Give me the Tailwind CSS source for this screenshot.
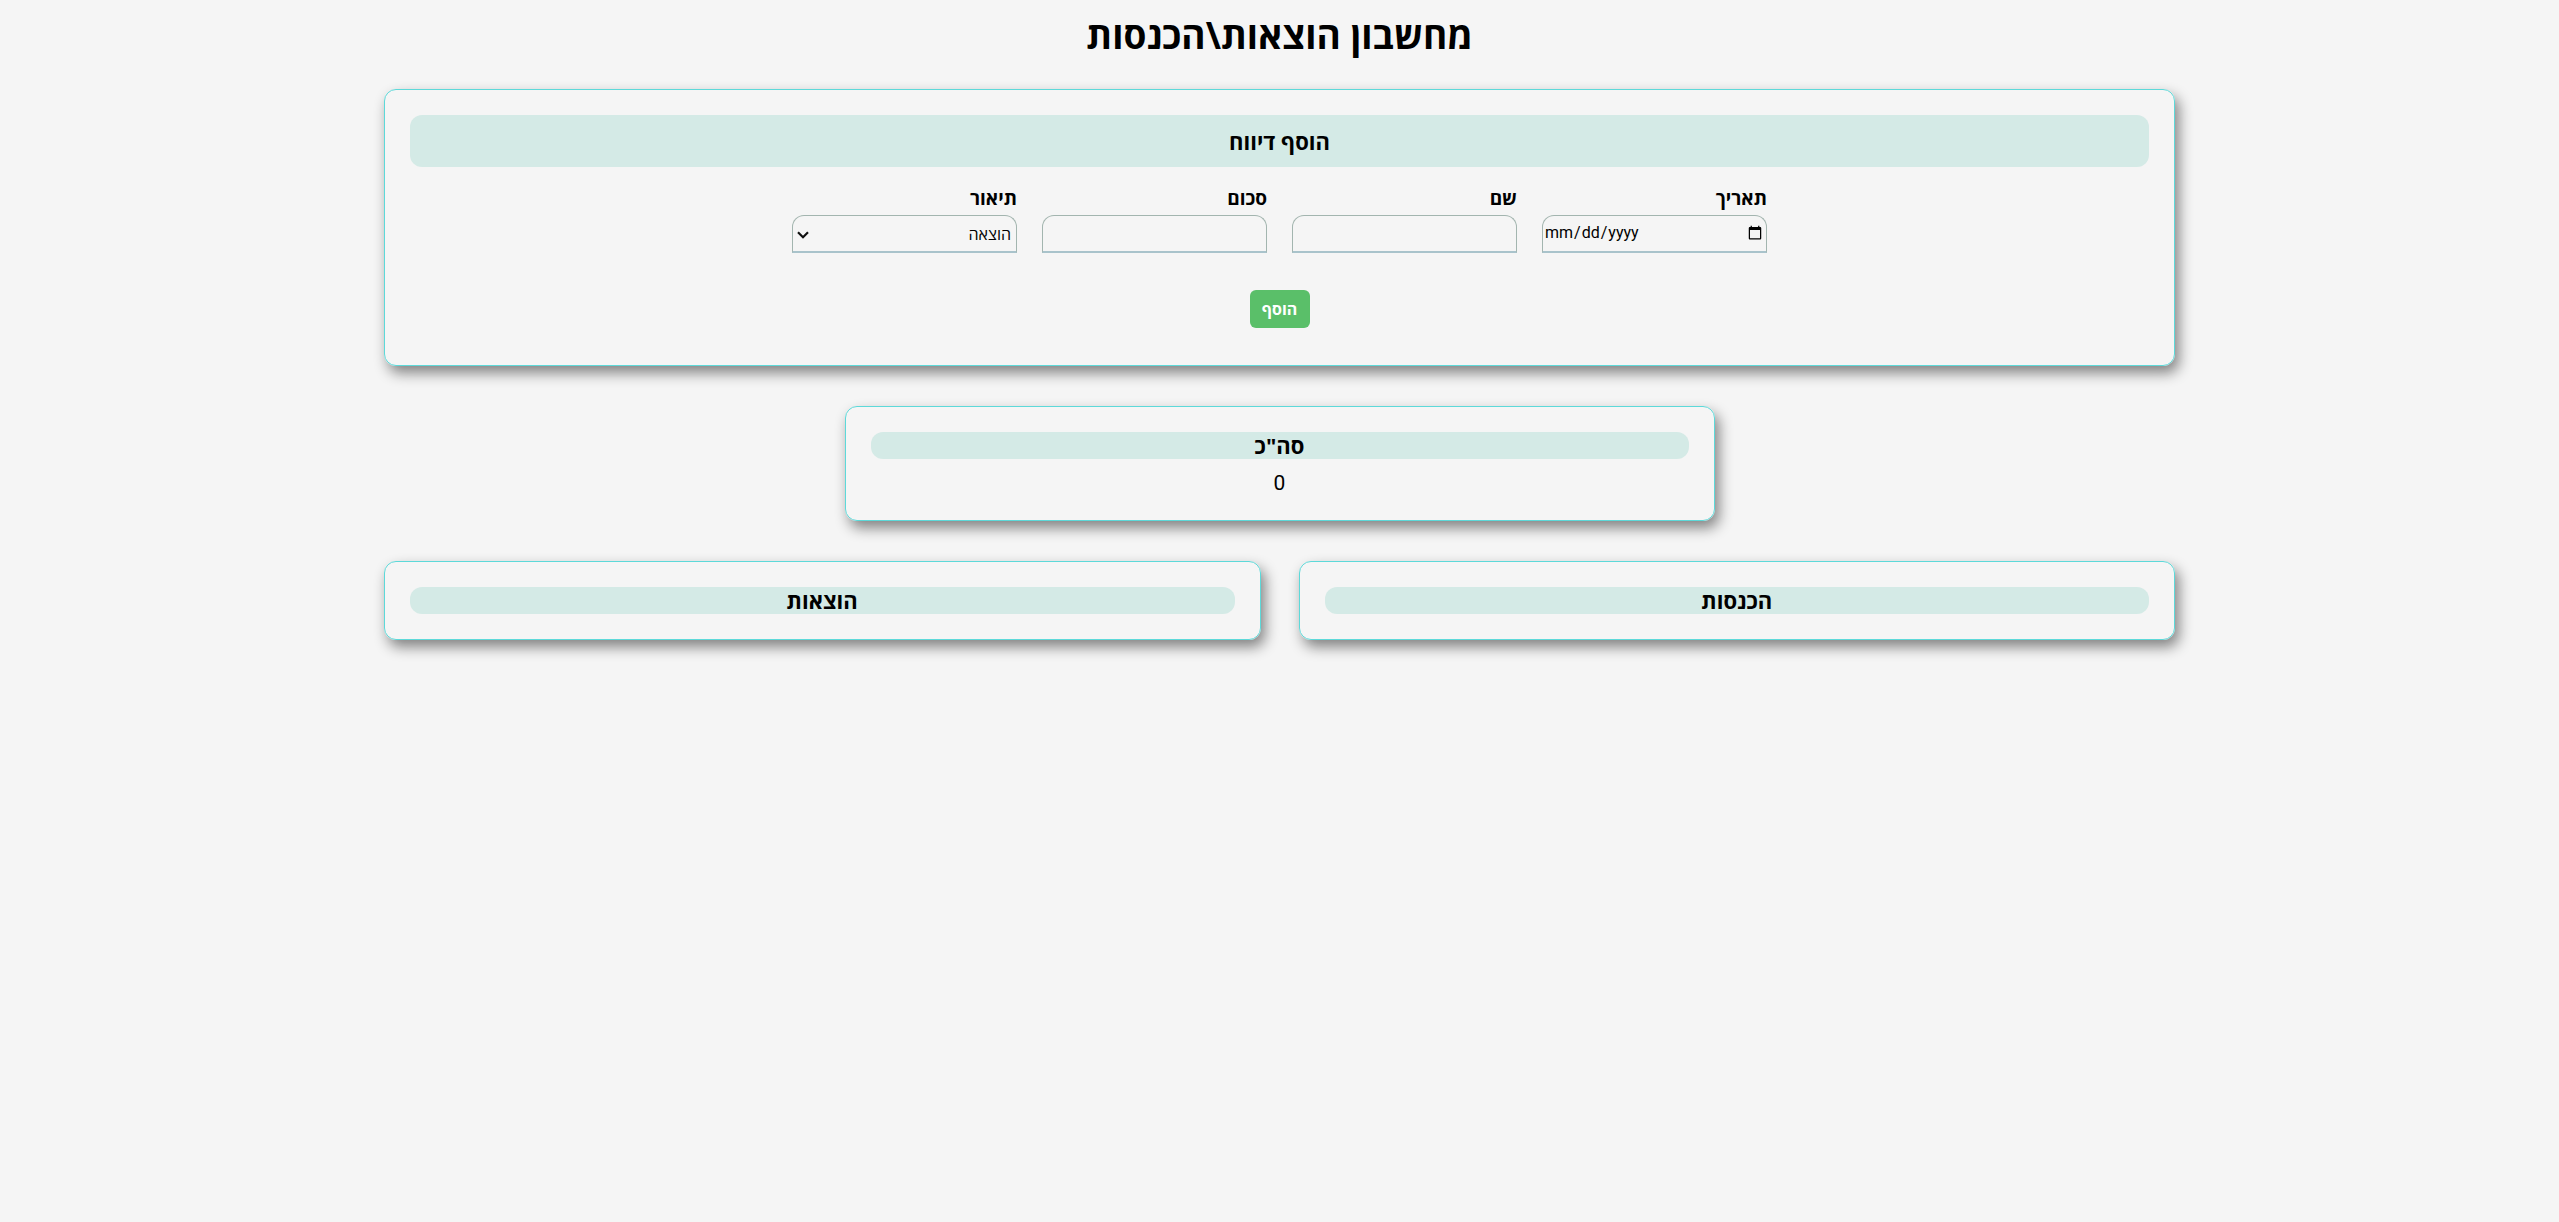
<!DOCTYPE html>
<html lang="he" dir="rtl">
<head>
<meta charset="utf-8">
<title>מחשבון הוצאות\הכנסות</title>
<script src="https://cdn.jsdelivr.net/npm/@tailwindcss/browser@4"></script>
</head>
<body class="min-h-screen bg-[#f5f5f5] font-['Open_Sans',sans-serif] text-black">
<main class="mx-auto flex w-[70%] flex-col items-center">
  <h1 class="mt-2 mb-[27px] text-[37px] leading-[54px] font-bold">מחשבון הוצאות\הכנסות</h1>

  <section class="w-full rounded-xl border border-[#5dd9d9] p-[25px] shadow-[4px_7px_14px_rgba(0,0,0,0.47)]">
    <h2 class="rounded-xl bg-[#d4eae6] text-center text-[22px] leading-[52px] font-bold">הוסף דיווח</h2>
    <form class="flex flex-col items-center">
      <div class="mt-[18px] flex justify-center gap-[25px]">
        <div class="flex w-[225px] flex-col gap-1">
          <label for="date" class="text-[19px] leading-[26px] font-bold">תאריך</label>
          <input id="date" type="date" lang="en-US" dir="ltr" class="h-[38px] rounded-t-xl border border-b-2 border-[#a3b5af] border-b-[#a9c3cb] px-px pb-0.5 font-['Roboto',sans-serif] text-base">
        </div>
        <div class="flex w-[225px] flex-col gap-1">
          <label for="name" class="text-[19px] leading-[26px] font-bold">שם</label>
          <input id="name" type="text" class="h-[38px] rounded-t-xl border border-b-2 border-[#a3b5af] border-b-[#a9c3cb] px-1 text-base">
        </div>
        <div class="flex w-[225px] flex-col gap-1">
          <label for="sum" class="text-[19px] leading-[26px] font-bold">סכום</label>
          <input id="sum" type="text" inputmode="decimal" class="h-[38px] rounded-t-xl border border-b-2 border-[#a3b5af] border-b-[#a9c3cb] px-1 text-base">
        </div>
        <div class="flex w-[225px] flex-col gap-1">
          <label for="kind" class="text-[19px] leading-[26px] font-bold">תיאור</label>
          <div class="relative">
            <select id="kind" class="h-[38px] w-full appearance-none rounded-t-xl border border-b-2 border-[#a3b5af] border-b-[#a9c3cb] px-[5px] text-base">
              <option>הוצאה</option>
              <option>הכנסה</option>
            </select>
            <svg class="pointer-events-none absolute top-4 left-[5px] h-2 w-3" viewBox="0 0 12 8" fill="none" stroke="#101010" stroke-width="2.2" aria-hidden="true"><path d="M1 1.2l5 5 5-5"/></svg>
          </div>
        </div>
      </div>
      <button type="button" class="mt-[37px] mb-3 h-[38px] w-[60px] rounded-md bg-[#5abf69] text-base font-bold text-white">הוסף</button>
    </form>
  </section>

  <section class="mt-10 w-[870px] max-w-full rounded-xl border border-[#5dd9d9] p-[25px] shadow-[4px_7px_14px_rgba(0,0,0,0.47)]">
    <h2 class="rounded-xl bg-[#d4eae6] text-center text-[22px] leading-[27px] font-bold">סה"כ</h2>
    <p class="mt-3 text-center font-['Roboto',sans-serif] text-[21px] leading-6">0</p>
  </section>

  <div class="mt-10 flex w-full gap-[38px]">
    <section class="flex-1 rounded-xl border border-[#5dd9d9] p-[25px] shadow-[4px_7px_14px_rgba(0,0,0,0.47)]">
      <h2 class="rounded-xl bg-[#d4eae6] text-center text-[22px] leading-[27px] font-bold">הכנסות</h2>
    </section>
    <section class="flex-1 rounded-xl border border-[#5dd9d9] p-[25px] shadow-[4px_7px_14px_rgba(0,0,0,0.47)]">
      <h2 class="rounded-xl bg-[#d4eae6] text-center text-[22px] leading-[27px] font-bold">הוצאות</h2>
    </section>
  </div>
</main>
</body>
</html>
